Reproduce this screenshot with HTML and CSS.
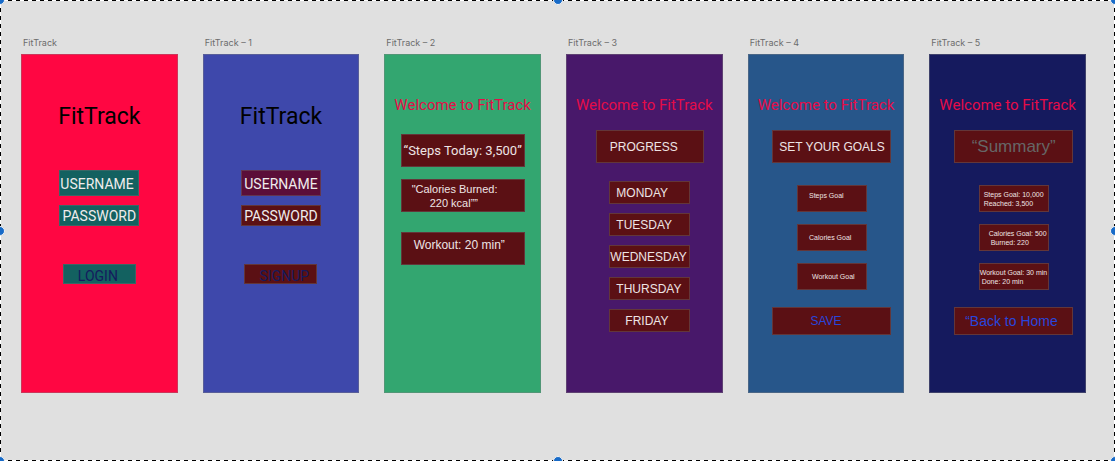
FILE: index.html
```html
<!DOCTYPE html>
<html lang="en">
<head>
<meta charset="utf-8">
<title>FitTrack</title>
<link rel="stylesheet" href="styles.css">
</head>
<body>
<main class="canvas">
  <section class="artboard">
    <h2 class="label">FitTrack</h2>
    <form class="screen screen-login">
      <h1 class="brand">FitTrack</h1>
      <input class="field field-user" type="text" placeholder="USERNAME" aria-label="Username">
      <input class="field field-pass" type="password" placeholder="PASSWORD" aria-label="Password">
      <button class="submit" type="button">LOGIN</button>
    </form>
  </section>

  <section class="artboard">
    <h2 class="label">FitTrack – 1</h2>
    <form class="screen screen-signup">
      <h1 class="brand">FitTrack</h1>
      <input class="field field-user" type="text" placeholder="USERNAME" aria-label="New username">
      <input class="field field-pass" type="password" placeholder="PASSWORD" aria-label="New password">
      <button class="submit" type="button">SIGNUP</button>
    </form>
  </section>

  <section class="artboard">
    <h2 class="label">FitTrack – 2</h2>
    <div class="screen screen-today">
      <h1 class="welcome">Welcome to FitTrack</h1>
      <p class="box stat stat-steps">“Steps Today: 3,500”</p>
      <p class="box stat stat-calories"><span>"Calories Burned:</span><span class="stat-value">220 kcal””</span></p>
      <p class="box stat stat-workout">Workout: 20 min”</p>
    </div>
  </section>

  <section class="artboard">
    <h2 class="label">FitTrack – 3</h2>
    <div class="screen screen-progress">
      <h1 class="welcome">Welcome to FitTrack</h1>
      <h3 class="box heading heading-progress">PROGRESS</h3>
      <div class="days">
        <button class="box day" type="button">MONDAY</button>
        <button class="box day" type="button">TUESDAY</button>
        <button class="box day day-wide" type="button">WEDNESDAY</button>
        <button class="box day" type="button">THURSDAY</button>
        <button class="box day day-short" type="button">FRIDAY</button>
      </div>
    </div>
  </section>

  <section class="artboard">
    <h2 class="label">FitTrack – 4</h2>
    <div class="screen screen-goals">
      <h1 class="welcome">Welcome to FitTrack</h1>
      <h3 class="box heading heading-goals">SET YOUR GOALS</h3>
      <div class="goals">
        <button class="box goal goal-steps" type="button">Steps Goal</button>
        <button class="box goal" type="button">Calories Goal</button>
        <button class="box goal goal-workout" type="button">Workout Goal</button>
      </div>
      <button class="box action action-save" type="button">SAVE</button>
    </div>
  </section>

  <section class="artboard">
    <h2 class="label">FitTrack – 5</h2>
    <div class="screen screen-summary">
      <h1 class="welcome">Welcome to FitTrack</h1>
      <h3 class="box heading heading-summary">“Summary”</h3>
      <div class="goals">
        <p class="box goal result result-steps"><span>Steps Goal: 10,000</span><span>Reached: 3,500</span></p>
        <p class="box goal result result-calories"><span>Calories Goal: 500</span><span class="indent">Burned: 220</span></p>
        <p class="box goal result"><span>Workout Goal: 30 min</span><span class="indent">Done: 20 min</span></p>
      </div>
      <a class="box action action-back" href="#">“Back to Home</a>
    </div>
  </section>

  <div class="selection" aria-hidden="true">
    <i class="handle top left"></i><i class="handle top middle"></i><i class="handle top right"></i>
    <i class="handle center left"></i><i class="handle center right"></i>
    <i class="handle bottom left"></i><i class="handle bottom middle"></i><i class="handle bottom right"></i>
  </div>
</main>
</body>
</html>
```
FILE: styles.css
```css
* { box-sizing: border-box; }

body {
  margin: 0;
  background: #e0e0e0;
  font-family: "Liberation Sans", Arial, sans-serif;
}

h1, h2, h3, p { margin: 0; font-weight: 400; }

.canvas {
  position: relative;
  display: grid;
  grid-template-columns: repeat(6, minmax(0, 1fr));
  gap: 25px;
  min-height: 100vh;
  padding: 37px 29px 68px 21px;
  overflow: hidden;
}

.artboard { display: flex; flex-direction: column; }

.label {
  padding-left: 2px;
  font: 400 9px/12px Inter, sans-serif;
  color: #6c6c6c;
  margin-bottom: 5px;
}

.screen {
  flex: 1;
  display: flex;
  flex-direction: column;
  align-items: center;
  border: 1px solid rgba(128, 128, 128, 0.4);
  padding: 40px 0 20px;
}

.screen-login { background: #ff0642; }
.screen-signup { background: #3e48ab; }
.screen-today { background: #33a670; }
.screen-progress { background: #48186a; }
.screen-goals { background: #27568a; }
.screen-summary { background: #151a5e; }

.brand {
  margin: 7px 0 38px;
  font: 400 23px/30px Roboto, sans-serif;
  color: #000;
}

.field, .submit {
  border: 1px solid rgba(112, 112, 112, 0.4);
  border-radius: 0;
  background: #136160;
  font: 400 14px/16px Roboto, sans-serif;
}

.field { width: 80px; padding: 1px 0 0; text-align: center; }
.field::placeholder { color: #f0ecec; opacity: 1; }
.field-user { height: 26px; margin-bottom: 9px; }
.field-pass { height: 21px; margin-bottom: 38px; }
.screen-login .field-user { text-align: left; }
.screen-signup .field-user { background: #5b0e38; }
.screen-signup .field-pass, .screen-signup .submit { background: #5b1014; }

.submit {
  width: 73px;
  height: 20px;
  padding: 3px 0 0 14px;
  color: #151a5e;
  text-align: left;
}

.welcome {
  font: 400 15px/20px Roboto, sans-serif;
  color: #e60c48;
  white-space: nowrap;
}

.box {
  display: flex;
  align-items: center;
  border: 1px solid rgba(112, 112, 112, 0.4);
  border-radius: 0;
  background: #5b1014;
  color: #eee4e4;
  padding: 0;
  font-family: inherit;
  white-space: nowrap;
  text-decoration: none;
}

.stat { width: 124px; height: 33px; font-size: 12px; line-height: 14px; }
.stat-steps { margin: 19px 0 12px; justify-content: center; font-family: Roboto, sans-serif; font-size: 13px; }
.stat-calories { flex-direction: column; align-items: flex-start; justify-content: flex-end; padding: 0 0 1px 10px; font-size: 11px; }
.stat-value { padding-left: 18px; }
.stat-workout { margin-top: 20px; padding: 0 0 7px 12px; }

.screen-progress { padding-left: 11px; }
.screen-goals, .screen-summary { padding-left: 12px; }
.screen-progress .welcome { margin-left: -11px; }
.screen-goals .welcome, .screen-summary .welcome { margin-left: -12px; }

.heading { width: 119px; height: 33px; margin-top: 15px; font-size: 12px; justify-content: center; }
.heading-progress { width: 108px; justify-content: flex-start; padding-left: 13px; }
.heading-summary { font-size: 17px; color: #666; }

.days { display: grid; gap: 9px; margin-top: 18px; }
.day { width: 81px; height: 23px; padding-left: 6px; font-size: 12px; }
.day-wide { padding-left: 0; }
.day-short { padding-left: 15px; }

.goals { display: grid; gap: 12px; margin: 22px 0 17px; }
.goal { width: 70px; height: 27px; padding-left: 11px; font-size: 7px; line-height: 9px; }
.goal-steps { padding-bottom: 6px; }
.goal-workout { padding-left: 14px; }

.result { flex-direction: column; align-items: flex-start; justify-content: center; padding: 0 0 0 4px; }
.result-calories { padding-left: 9px; }
.result:last-child { padding-left: 0; }
.indent { padding-left: 2px; }

.action { width: 119px; height: 28px; font-size: 12px; color: #2846dc; }
.action-save { padding-left: 37px; }
.action-back { font-size: 14px; padding-left: 10px; }

/* Marching-ants selection around the whole canvas */
.selection {
  position: absolute;
  inset: 0;
  pointer-events: none;
  background:
    repeating-linear-gradient(90deg, #000 0 4px, #fff 4px 8px) top / 100% 1px no-repeat,
    repeating-linear-gradient(90deg, #000 0 4px, #fff 4px 8px) bottom / 100% 1px no-repeat,
    repeating-linear-gradient(180deg, #000 0 4px, #fff 4px 8px) left / 1px 100% no-repeat,
    repeating-linear-gradient(180deg, #000 0 4px, #fff 4px 8px) right / 1px 100% no-repeat;
}

.handle {
  position: absolute;
  width: 10px;
  height: 10px;
  margin: -5px;
  border: 1px solid #f4f4f4;
  border-radius: 50%;
  background: #186bc8;
}

.top { top: 0; }
.center { top: 50%; }
.bottom { bottom: 0; }
.left { left: 0; }
.middle { left: 50%; }
.right { right: 0; }
```
